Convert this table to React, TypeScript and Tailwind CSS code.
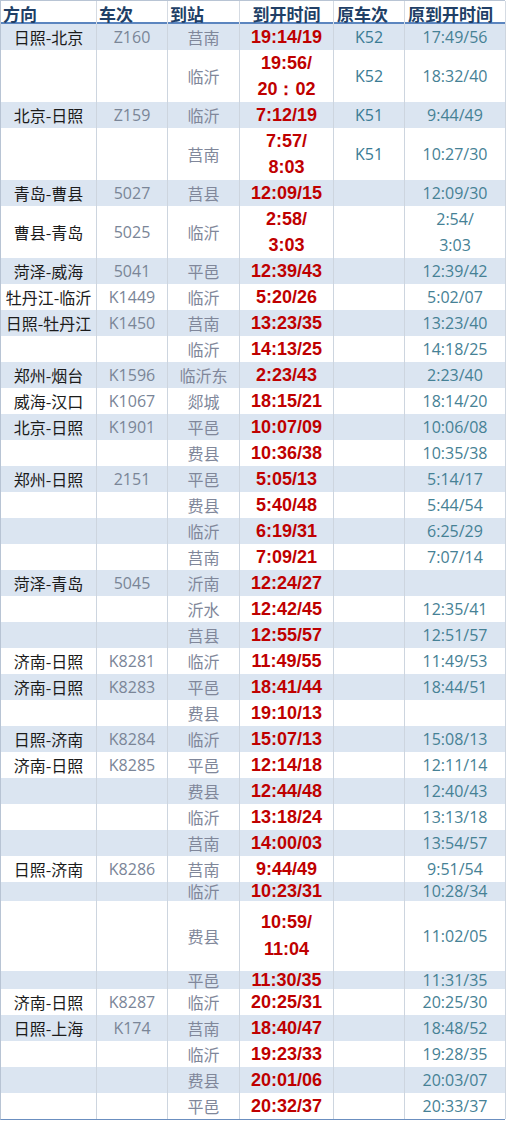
import React from "react";

type Row = {
  dir?: string;
  train?: string;
  station: string;
  time: string[];
  orig?: string;
  origTime?: string[];
  h?: string;
  lead?: string;
};

const rows: Row[] = [
  { dir: "日照-北京", train: "Z160", station: "莒南", time: ["19:14/19"], orig: "K52", origTime: ["17:49/56"] },
  { station: "临沂", time: ["19:56/", "20：02"], orig: "K52", origTime: ["18:32/40"], h: "h-[52px]" },
  { dir: "北京-日照", train: "Z159", station: "临沂", time: ["7:12/19"], orig: "K51", origTime: ["9:44/49"] },
  { station: "莒南", time: ["7:57/", "8:03"], orig: "K51", origTime: ["10:27/30"], h: "h-[52px]" },
  { dir: "青岛-曹县", train: "5027", station: "莒县", time: ["12:09/15"], origTime: ["12:09/30"] },
  { dir: "曹县-青岛", train: "5025", station: "临沂", time: ["2:58/", "3:03"], origTime: ["2:54/", "3:03"], h: "h-[52px]" },
  { dir: "菏泽-威海", train: "5041", station: "平邑", time: ["12:39/43"], origTime: ["12:39/42"] },
  { dir: "牡丹江-临沂", train: "K1449", station: "临沂", time: ["5:20/26"], origTime: ["5:02/07"] },
  { dir: "日照-牡丹江", train: "K1450", station: "莒南", time: ["13:23/35"], origTime: ["13:23/40"] },
  { station: "临沂", time: ["14:13/25"], origTime: ["14:18/25"] },
  { dir: "郑州-烟台", train: "K1596", station: "临沂东", time: ["2:23/43"], origTime: ["2:23/40"] },
  { dir: "威海-汉口", train: "K1067", station: "郯城", time: ["18:15/21"], origTime: ["18:14/20"] },
  { dir: "北京-日照", train: "K1901", station: "平邑", time: ["10:07/09"], origTime: ["10:06/08"] },
  { station: "费县", time: ["10:36/38"], origTime: ["10:35/38"] },
  { dir: "郑州-日照", train: "2151", station: "平邑", time: ["5:05/13"], origTime: ["5:14/17"] },
  { station: "费县", time: ["5:40/48"], origTime: ["5:44/54"] },
  { station: "临沂", time: ["6:19/31"], origTime: ["6:25/29"] },
  { station: "莒南", time: ["7:09/21"], origTime: ["7:07/14"] },
  { dir: "菏泽-青岛", train: "5045", station: "沂南", time: ["12:24/27"] },
  { station: "沂水", time: ["12:42/45"], origTime: ["12:35/41"] },
  { station: "莒县", time: ["12:55/57"], origTime: ["12:51/57"] },
  { dir: "济南-日照", train: "K8281", station: "临沂", time: ["11:49/55"], origTime: ["11:49/53"] },
  { dir: "济南-日照", train: "K8283", station: "平邑", time: ["18:41/44"], origTime: ["18:44/51"] },
  { station: "费县", time: ["19:10/13"] },
  { dir: "日照-济南", train: "K8284", station: "临沂", time: ["15:07/13"], origTime: ["15:08/13"] },
  { dir: "济南-日照", train: "K8285", station: "平邑", time: ["12:14/18"], origTime: ["12:11/14"] },
  { station: "费县", time: ["12:44/48"], origTime: ["12:40/43"] },
  { station: "临沂", time: ["13:18/24"], origTime: ["13:13/18"] },
  { station: "莒南", time: ["14:00/03"], origTime: ["13:54/57"] },
  { dir: "日照-济南", train: "K8286", station: "莒南", time: ["9:44/49"], origTime: ["9:51/54"] },
  { station: "临沂", time: ["10:23/31"], origTime: ["10:28/34"], h: "h-[19px]", lead: "leading-[19px]" },
  { station: "费县", time: ["10:59/", "11:04"], origTime: ["11:02/05"], h: "h-[70px]", lead: "leading-[27px]" },
  { station: "平邑", time: ["11:30/35"], origTime: ["11:31/35"], h: "h-[18px]", lead: "leading-[18px]" },
  { dir: "济南-日照", train: "K8287", station: "临沂", time: ["20:25/31"], origTime: ["20:25/30"] },
  { dir: "日照-上海", train: "K174", station: "莒南", time: ["18:40/47"], origTime: ["18:48/52"] },
  { station: "临沂", time: ["19:23/33"], origTime: ["19:28/35"] },
  { station: "费县", time: ["20:01/06"], origTime: ["20:03/07"] },
  { station: "平邑", time: ["20:32/37"], origTime: ["20:33/37"] },
];

const grid = "grid grid-cols-[96px_71px_72px_94px_71px_101px]";
const cjk = "font-['Noto_Sans_CJK_SC',sans-serif]";
const open = "font-['Open_Sans','Noto_Sans_CJK_SC',sans-serif]";

function Cell({ children, className = "" }: { children?: React.ReactNode; className?: string }) {
  return (
    <div className={`flex flex-col items-center justify-center overflow-visible whitespace-nowrap border-r border-[#cdd5df] ${className}`}>
      {children}
    </div>
  );
}

export default function App() {
  return (
    <div className="w-[509px] h-[1121px] bg-white">
      <div className="w-[505px] border-l border-t border-[#b8c4d4] border-b border-b-[#6b8fc0]">
        {/* Header */}
        <div className={`${grid} h-[23px] border-b-2 border-[#5b85bf] text-[17px] font-bold text-[#213f66] ${cjk}`}>
          <div className="flex items-center pl-[2px] border-r border-[#d5dbe3]">方向</div>
          <div className="flex items-center pl-[2px] border-r border-[#d5dbe3]">车次</div>
          <div className="flex items-center pl-[2px] border-r border-[#d5dbe3]">到站</div>
          <div className="flex items-center justify-center border-r border-[#d5dbe3]">到开时间</div>
          <div className="flex items-center pl-[3px] border-r border-[#d5dbe3]">原车次</div>
          <div className="flex items-center pl-[3px] border-r border-[#d5dbe3]">原到开时间</div>
        </div>

        {rows.map((r, i) => {
          const lead = r.lead ?? "leading-[26px]";
          return (
            <div
              key={i}
              className={`${grid} ${r.h ?? "h-[26px]"} ${i % 2 === 0 ? "bg-[#dbe5f1]" : "bg-white"}`}
            >
              <Cell className={`${cjk} text-[16px] text-[#1b1b1b] ${lead}`}>{r.dir}</Cell>
              <Cell className={`${open} text-[16px] text-[#7a8597] ${lead}`}>{r.train}</Cell>
              <Cell className={`${cjk} text-[16px] text-[#80879a] ${lead}`}>{r.station}</Cell>
              <Cell className={`font-['Liberation_Sans',Arial,sans-serif] font-bold text-[18px] text-[#bf0000] ${lead}`}>
                {r.time.map((t, k) => (
                  <span key={k}>{t}</span>
                ))}
              </Cell>
              <Cell className={`${open} text-[16px] text-[#3a7b94] ${lead}`}>{r.orig}</Cell>
              <Cell className={`${open} text-[16px] text-[#468195] ${lead}`}>
                {r.origTime?.map((t, k) => (
                  <span key={k}>{t}</span>
                ))}
              </Cell>
            </div>
          );
        })}
      </div>
    </div>
  );
}
